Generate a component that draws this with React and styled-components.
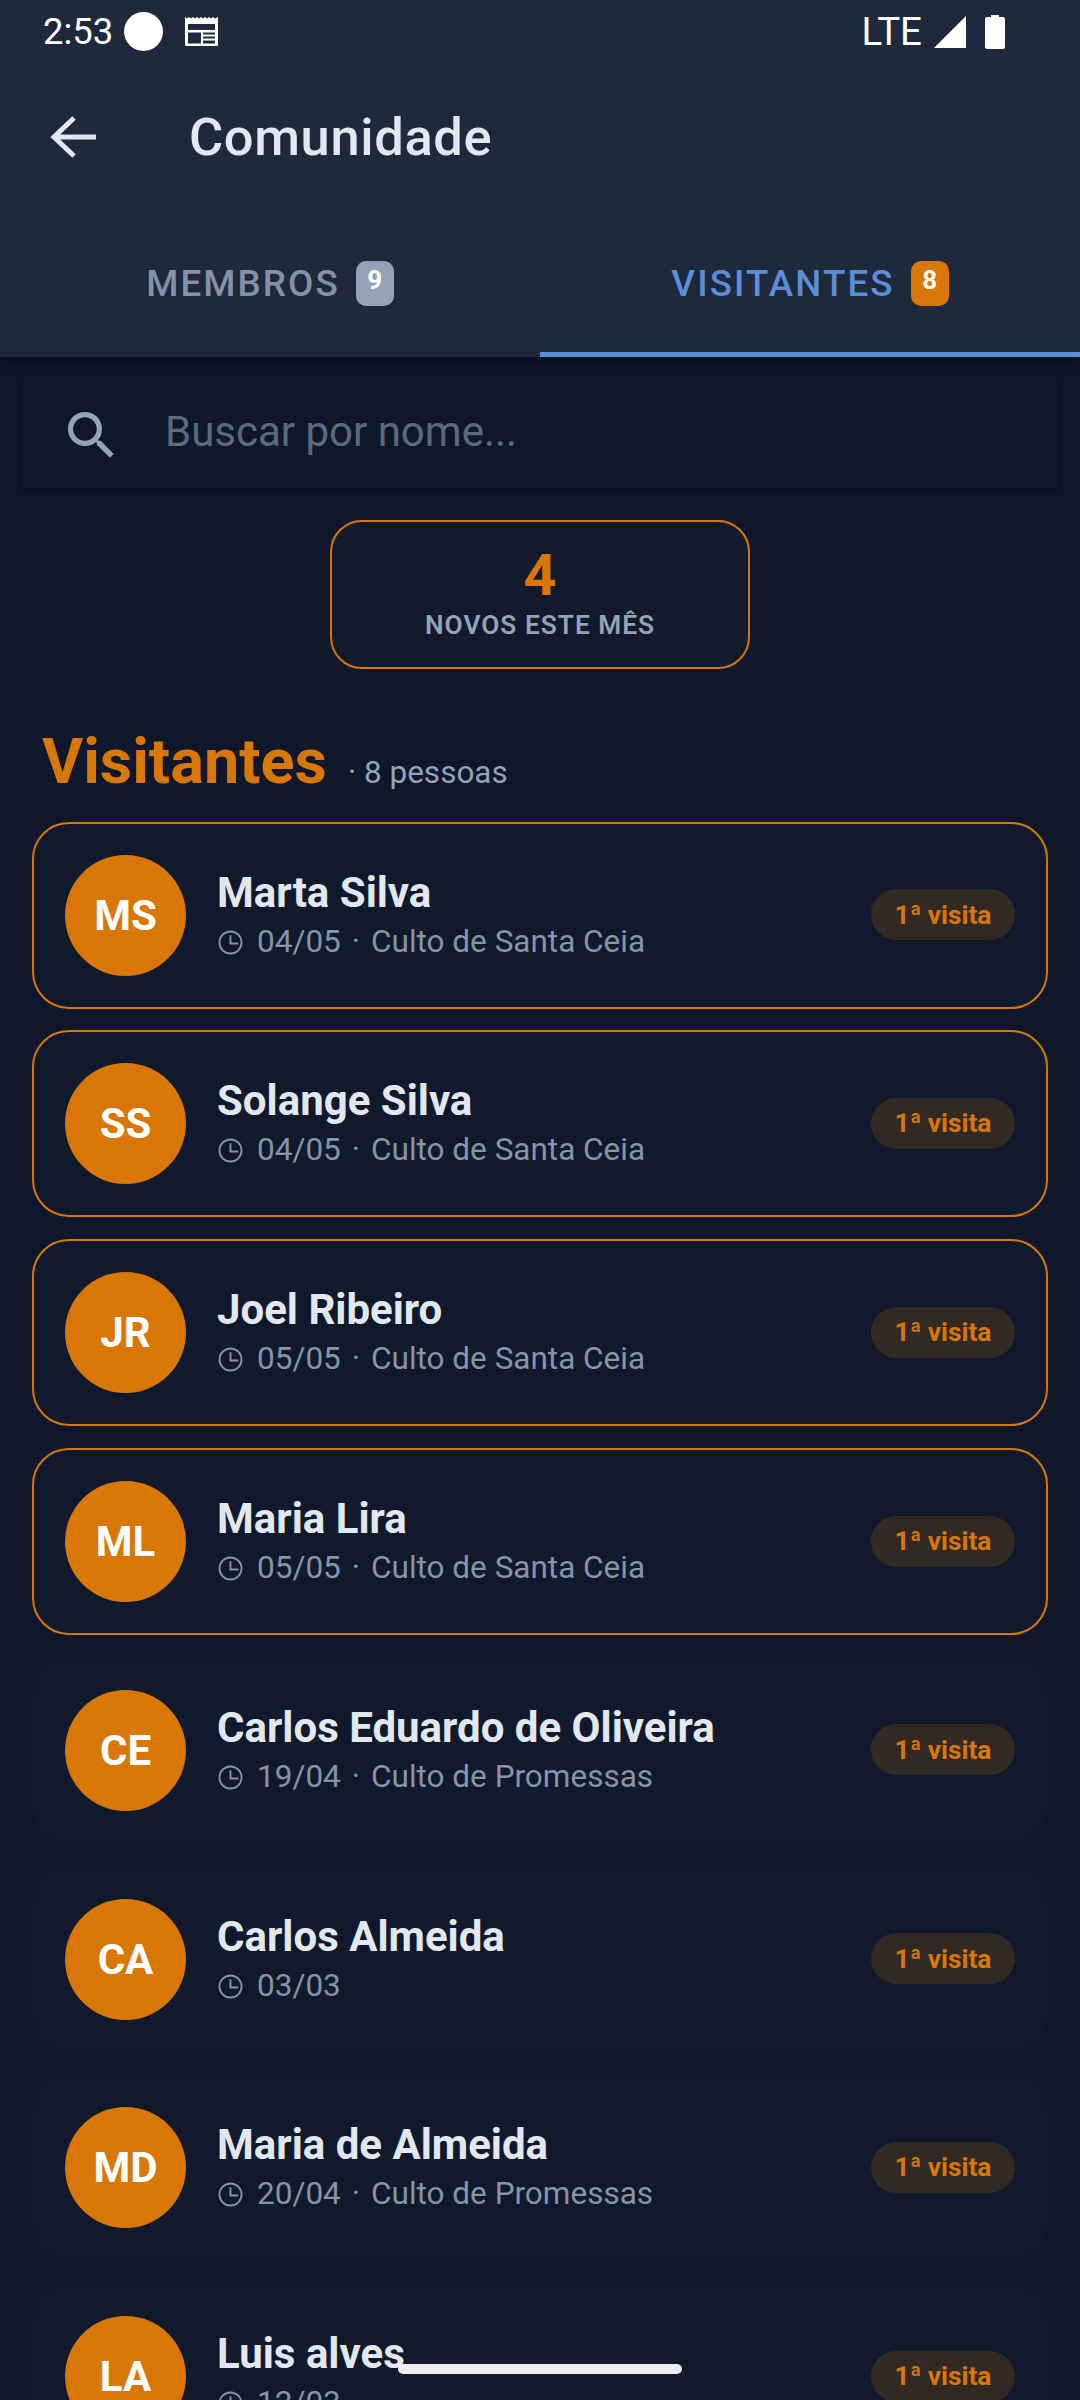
import React from 'react';
import styled, { createGlobalStyle } from 'styled-components';

const GlobalStyle = createGlobalStyle`
  html, body {
    margin: 0;
    padding: 0;
    background: #0f172a;
  }
  * {
    box-sizing: border-box;
  }
`;

const Screen = styled.div`
  position: relative;
  width: 1080px;
  height: 2400px;
  overflow: hidden;
  background: #0f172a;
  font-family: Roboto, "Liberation Sans", sans-serif;
`;

const Header = styled.div`
  position: relative;
  z-index: 1;
  background: #1e293b;
  height: 357px;
  display: flex;
  flex-direction: column;
  box-shadow: 0 4px 10px rgba(0, 0, 0, 0.35);
`;

const StatusBar = styled.div`
  height: 63px;
  display: flex;
  align-items: center;
  padding: 0 75px 0 43px;
  color: #fff;
  font-size: 36.5px;
`;

const StatusRight = styled.div`
  margin-left: auto;
  display: flex;
  align-items: center;
  font-size: 38.5px;
`;

const Dot = styled.div`
  width: 39px;
  height: 39px;
  border-radius: 50%;
  background: #fff;
  margin-left: 11px;
`;

const TitleBar = styled.div`
  height: 147px;
  display: flex;
  align-items: center;
  padding-left: 49px;
`;

const Title = styled.div`
  margin-left: 92px;
  font-size: 52.5px;
  font-weight: 500;
  letter-spacing: 0.6px;
  color: #e2e8f0;
`;

const Tabs = styled.div`
  flex: 1;
  display: flex;
`;

const Tab = styled.div`
  flex: 1;
  display: flex;
  align-items: center;
  justify-content: center;
  gap: 16px;
  padding-top: 4px;
  border-bottom: 5px solid ${p => (p.$active ? '#5b8dd9' : 'transparent')};
  color: ${p => (p.$active ? '#5b8dd9' : '#8592a6')};
  font-size: 36.75px;
  font-weight: 500;
  letter-spacing: 2.1px;
`;

const TabCount = styled.span`
  width: 38px;
  height: 45px;
  border-radius: 10px;
  display: flex;
  align-items: center;
  justify-content: center;
  padding-bottom: 6px;
  background: ${p => (p.$active ? '#d97706' : '#94a3b8')};
  color: #fff;
  font-size: 26px;
  font-weight: 700;
  letter-spacing: 0;
`;

const Content = styled.div`
  padding: 0 32px;
`;

const SearchBox = styled.div`
  height: 110px;
  margin: 21px -11px 0;
  display: flex;
  align-items: center;
  padding-left: 39px;
  gap: 42px;
  background: #0f1829;
  box-shadow: 0 3px 6px rgba(0, 0, 0, 0.3);
  border-radius: 5px;
  color: #5c6a7f;
  font-size: 42px;
`;

const SearchHint = styled.span`
  margin-bottom: 4px;
`;

const Stat = styled.div`
  width: 420px;
  height: 149px;
  margin: 32px auto 0;
  background: #121a2c;
  border: 2px solid #d97706;
  border-radius: 32px;
  display: flex;
  flex-direction: column;
  align-items: center;
  padding-top: 20px;
`;

const StatValue = styled.div`
  font-size: 57.75px;
  font-weight: 700;
  line-height: 66px;
  color: #d97706;
`;

const StatLabel = styled.div`
  margin-top: 2px;
  font-size: 26.25px;
  font-weight: 600;
  line-height: 30px;
  letter-spacing: 1px;
  color: #94a3b8;
`;

const SectionHead = styled.div`
  display: flex;
  align-items: baseline;
  height: 152.7px;
  padding: 56px 0 0 10px;
`;

const SectionTitle = styled.div`
  font-size: 63px;
  font-weight: 700;
  line-height: 74px;
  color: #d97706;
`;

const SectionCount = styled.div`
  margin-left: 21px;
  font-size: 31.5px;
  color: #94a3b8;
`;

const List = styled.div`
  display: flex;
  flex-direction: column;
  gap: 21.8px;
`;

const Card = styled.div`
  height: 187px;
  flex-shrink: 0;
  display: flex;
  align-items: center;
  padding: 0 31px;
  background: #111a2c;
  border: 2px solid ${p => (p.$highlight ? '#d97706' : 'transparent')};
  border-radius: 37px;
`;

const Avatar = styled.div`
  width: 121px;
  height: 121px;
  flex-shrink: 0;
  border-radius: 50%;
  background: #d97706;
  display: flex;
  align-items: center;
  justify-content: center;
  color: #fff;
  font-size: 42px;
  font-weight: 700;
`;

const Info = styled.div`
  margin-left: 31px;
  flex: 1;
  min-width: 0;
`;

const Name = styled.div`
  font-size: 42px;
  font-weight: 700;
  line-height: 50px;
  color: #e2e8f0;
`;

const Meta = styled.div`
  display: flex;
  align-items: center;
  margin-top: 3px;
  font-size: 31.5px;
  line-height: 42px;
  color: #8594a8;
`;

const MetaDot = styled.span`
  margin: 0 11px 0 11px;
`;

const Badge = styled.div`
  width: 144px;
  height: 51px;
  flex-shrink: 0;
  margin-bottom: 1px;
  border-radius: 26px;
  background: #332923;
  display: flex;
  align-items: center;
  justify-content: center;
  color: #d97706;
  font-size: 26.25px;
  font-weight: 700;
`;

const HomeBar = styled.div`
  position: absolute;
  z-index: 2;
  left: 398px;
  top: 2364px;
  width: 284px;
  height: 10px;
  border-radius: 5px;
  background: #eceef0;
`;

const BackIcon = () => (
  <svg width="48" height="44" viewBox="0 0 48 44" fill="none" stroke="#e2e8f0" strokeWidth="5">
    <path d="M47 22H5M25 3L5 22l20 19" />
  </svg>
);

const SearchIcon = () => (
  <svg width="63" height="63" viewBox="0 0 24 24" fill="#94a3b8" style={{ marginTop: 5 }}>
    <path d="M15.5 14h-.79l-.28-.27A6.47 6.47 0 0 0 16 9.5 6.5 6.5 0 1 0 9.5 16c1.61 0 3.09-.59 4.23-1.57l.27.28v.79l5 4.99L20.49 19l-4.99-5zm-6 0C7.01 14 5 11.99 5 9.5S7.01 5 9.5 5 14 7.01 14 9.5 11.99 14 9.5 14z" />
  </svg>
);

const ClockIcon = () => (
  <svg width="25" height="25" viewBox="0 0 24 24" fill="none" stroke="#8594a8" strokeWidth="1.8" style={{ marginRight: 14, marginLeft: 1, marginTop: 1 }}>
    <circle cx="12" cy="12" r="10.6" />
    <path d="M12 5v8h7.5" />
  </svg>
);

const CalendarIcon = () => (
  <svg width="33" height="29" viewBox="0 0 33 29" style={{ marginLeft: 22 }}>
    <path fill="#fff" fillRule="evenodd" d="M0 0l2 1.5L4 0l2 1.5L8 0l2 1.5L12 0l2 1.5L16 0l2 1.5L20 0l2 1.5L24 0l2 1.5L28 0l2 1.5L33 0v27.5a1.5 1.5 0 0 1-1.5 1.5h-30A1.5 1.5 0 0 1 0 27.5zM3 7v6h27V7zM3 15.500v11h13v-11zM18 15.500v2h12v-2zM18 19.500v2h12v-2zM18 23.500v3h12v-3z" />
  </svg>
);

const SignalIcon = () => (
  <svg width="32" height="32" viewBox="0 0 32 32" style={{ marginLeft: 12 }}>
    <path fill="#fff" d="M32 0v32H0z" />
  </svg>
);

const BatteryIcon = () => (
  <svg width="20" height="34" viewBox="0 0 20 34" style={{ marginLeft: 19 }}>
    <path fill="#fff" d="M6 0h8v2h4a2 2 0 0 1 2 2v28a2 2 0 0 1-2 2H2a2 2 0 0 1-2-2V4a2 2 0 0 1 2-2h4z" />
  </svg>
);

const people = [
  { initials: 'MS', name: 'Marta Silva', date: '04/05', place: 'Culto de Santa Ceia', highlight: true },
  { initials: 'SS', name: 'Solange Silva', date: '04/05', place: 'Culto de Santa Ceia', highlight: true },
  { initials: 'JR', name: 'Joel Ribeiro', date: '05/05', place: 'Culto de Santa Ceia', highlight: true },
  { initials: 'ML', name: 'Maria Lira', date: '05/05', place: 'Culto de Santa Ceia', highlight: true },
  { initials: 'CE', name: 'Carlos Eduardo de Oliveira', date: '19/04', place: 'Culto de Promessas' },
  { initials: 'CA', name: 'Carlos Almeida', date: '03/03' },
  { initials: 'MD', name: 'Maria de Almeida', date: '20/04', place: 'Culto de Promessas' },
  { initials: 'LA', name: 'Luis alves', date: '12/03' },
];

const App = () => {
  return (
    <Screen>
      <GlobalStyle />
      <Header>
        <StatusBar>
          2:53
          <Dot />
          <CalendarIcon />
          <StatusRight>
            LTE
            <SignalIcon />
            <BatteryIcon />
          </StatusRight>
        </StatusBar>
        <TitleBar>
          <BackIcon />
          <Title>Comunidade</Title>
        </TitleBar>
        <Tabs>
          <Tab>
            MEMBROS <TabCount>9</TabCount>
          </Tab>
          <Tab $active>
            VISITANTES <TabCount $active>8</TabCount>
          </Tab>
        </Tabs>
      </Header>
      <Content>
        <SearchBox>
          <SearchIcon />
          <SearchHint>Buscar por nome...</SearchHint>
        </SearchBox>
        <Stat>
          <StatValue>4</StatValue>
          <StatLabel>NOVOS ESTE MÊS</StatLabel>
        </Stat>
        <SectionHead>
          <SectionTitle>Visitantes</SectionTitle>
          <SectionCount>· 8 pessoas</SectionCount>
        </SectionHead>
        <List>
          {people.map(person => (
            <Card key={person.initials} $highlight={person.highlight}>
              <Avatar>{person.initials}</Avatar>
              <Info>
                <Name>{person.name}</Name>
                <Meta>
                  <ClockIcon />
                  {person.date}
                  {person.place && (
                    <>
                      <MetaDot>·</MetaDot>
                      {person.place}
                    </>
                  )}
                </Meta>
              </Info>
              <Badge>1ª visita</Badge>
            </Card>
          ))}
        </List>
      </Content>
      <HomeBar />
    </Screen>
  );
};

export default App;
